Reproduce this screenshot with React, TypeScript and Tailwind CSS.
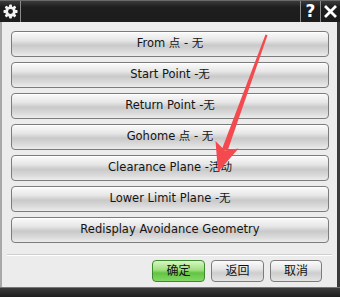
import React from "react";

const ROWS = [
  "From 点 - 无",
  "Start Point -无",
  "Return Point -无",
  "Gohome 点 - 无",
  "Clearance Plane -活动",
  "Lower Limit Plane -无",
  "Redisplay Avoidance Geometry",
];

const FONT = { fontFamily: '"DejaVu Sans", "Noto Sans CJK SC", sans-serif' };

function Gear() {
  return (
    <svg width="15" height="15" viewBox="0 0 16 16">
      <g fill="#f2f2f2">
        {[0, 45, 90, 135].map((a) => (
          <rect key={a} x="6.5" y="0.5" width="3" height="15" rx="0.8" transform={`rotate(${a} 8 8)`} />
        ))}
        <circle cx="8" cy="8" r="5.6" />
      </g>
      <circle cx="8" cy="8" r="2.6" fill="#1e1e1e" />
    </svg>
  );
}

function RowButton({ label }: { label: string }) {
  return (
    <div className="flex h-[26px] items-center justify-center rounded-[4px] border border-[#7c7c7c] bg-[linear-gradient(#fbfbfb_0%,#e6e6e6_35%,#c9c9c9_55%,#dadada_80%,#ececec_100%)] text-[11.5px] text-[#141414] shadow-[inset_0_1px_0_#ffffff]">
      {label}
    </div>
  );
}

export default function App() {
  return (
    <div className="relative flex h-[297px] w-[340px] flex-col overflow-hidden bg-[#ececec]" style={FONT}>
      {/* title bar */}
      <div className="flex h-[22px] items-stretch border-t border-[#6a6a6a] bg-[linear-gradient(#3a3a3a_0%,#1e1e1e_30%,#1c1c1c_100%)]">
        <div className="flex w-[21px] items-center justify-center border-r border-[#8a8a8a]">
          <Gear />
        </div>
        <div className="flex-1" />
        <div className="flex w-[20px] items-center justify-center border-l border-[#8a8a8a] text-[17px] font-bold leading-none text-white">
          ?
        </div>
        <div className="flex w-[20px] items-center justify-center border-l border-[#8a8a8a]">
          <svg width="13" height="13" viewBox="0 0 13 13">
            <path d="M2 2L11 11M11 2L2 11" stroke="#fff" strokeWidth="2.8" strokeLinecap="square" />
          </svg>
        </div>
      </div>

      {/* body */}
      <div className="flex flex-1 border-l-2 border-r-[3px] border-l-[#a8a8a8] border-r-[#3a3a3a]">
        <div className="flex flex-1 flex-col">
          <div className="flex flex-col gap-[5px] pl-[9px] pr-[8px] pt-[9px]">
            {ROWS.map((r) => (
              <RowButton key={r} label={r} />
            ))}
          </div>
          <div className="mx-[5px] mt-[11px] h-[2px] border-t border-[#cfcfcf] bg-white" />
          <div className="mt-[4px] flex justify-end gap-[6px] pr-[15px] text-[12px]">
            <div className="flex h-[22px] w-[53px] items-center justify-center rounded-[4px] border border-[#3d8a2e] bg-[linear-gradient(#d7f6c4_0%,#9fe07f_45%,#62c443_60%,#86d866_100%)] text-[#111]">
              确定
            </div>
            <div className="flex h-[22px] w-[53px] items-center justify-center rounded-[4px] border border-[#7c7c7c] bg-[linear-gradient(#fbfbfb_0%,#e6e6e6_40%,#cdcdcd_60%,#e4e4e4_100%)] text-[#111]">
              返回
            </div>
            <div className="flex h-[22px] w-[52px] items-center justify-center rounded-[4px] border border-[#7c7c7c] bg-[linear-gradient(#fbfbfb_0%,#e6e6e6_40%,#cdcdcd_60%,#e4e4e4_100%)] text-[#111]">
              取消
            </div>
          </div>
        </div>
      </div>

      {/* bottom bar */}
      <div className="h-[10px] border-t border-[#777] bg-[linear-gradient(#3c3c3c,#1e1e1e)]" />

      {/* red annotation arrow */}
      <svg className="pointer-events-none absolute left-0 top-0" width="340" height="297">
        <polygon points="265.5,34.5 267.5,35.2 227.5,151 222,149" fill="#f24a4e" />
        <polygon points="218,172 215.5,141 225,150.5 238.5,148.5" fill="#f24a4e" />
      </svg>
    </div>
  );
}
